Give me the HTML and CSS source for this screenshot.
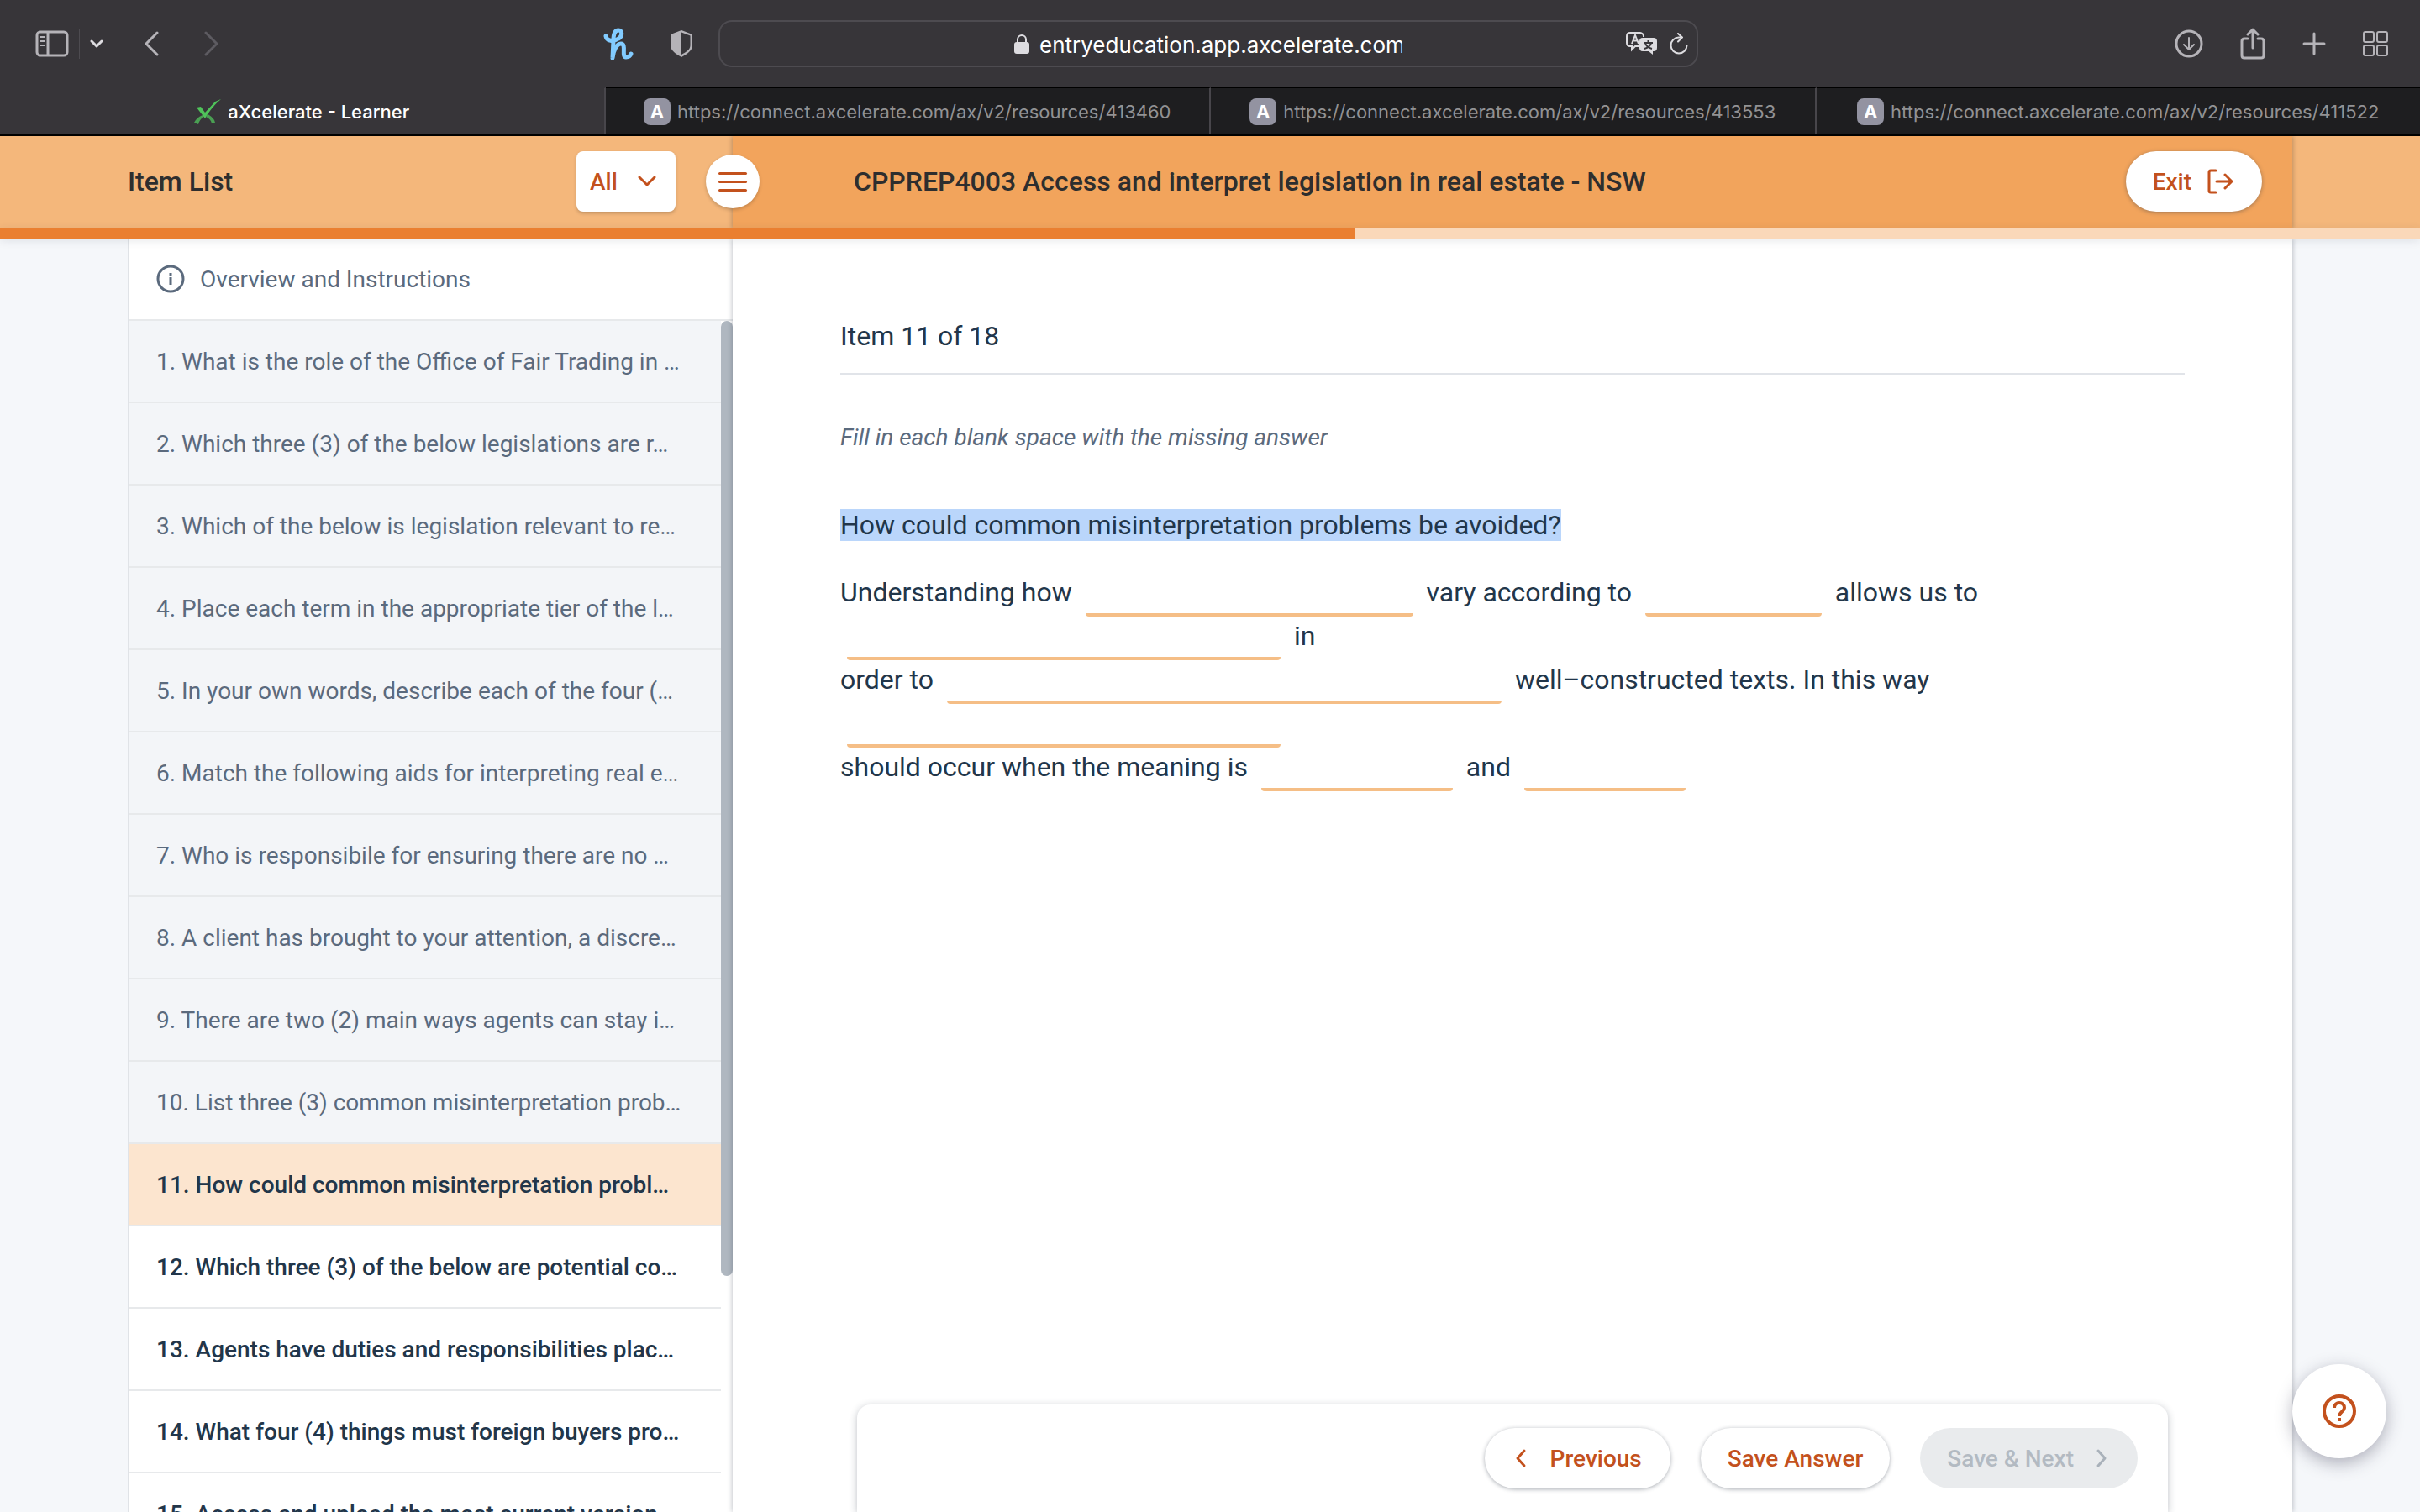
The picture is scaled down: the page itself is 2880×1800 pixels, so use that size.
FILE: index.html
```html
<!DOCTYPE html>
<html lang="en">
<head>
    <meta charset="UTF-8">
    <meta name="viewport" content="width=device-width, initial-scale=1.0">
    <title>aXcelerate - Learner</title>
    <link rel="stylesheet" href="styles.css">
</head>
<body>
    <!-- Browser toolbar -->
    <div class="toolbar">
        <div class="toolbar-side">
            <button class="icon-button" aria-label="Show sidebar">
                <svg width="40" height="32" viewBox="0 0 40 32" fill="none" stroke="#b5b3b8" stroke-width="3"><rect x="2" y="2" width="36" height="28" rx="4"/><path d="M15 2v28"/><path d="M6 8h5M6 13h5M6 18h5" stroke-width="2"/></svg>
            </button>
            <span class="toolbar-divider"></span>
            <button class="icon-button" aria-label="Tab groups">
                <svg width="16" height="12" viewBox="0 0 16 12" fill="none" stroke="#dddce0" stroke-width="3" stroke-linecap="round" stroke-linejoin="round"><path d="M2 3l6 6 6-6"/></svg>
            </button>
            <button class="icon-button back" aria-label="Back">
                <svg width="18" height="30" viewBox="0 0 18 30" fill="none" stroke="#b5b3b8" stroke-width="3" stroke-linecap="round" stroke-linejoin="round"><path d="M16 2L3 15l13 13"/></svg>
            </button>
            <button class="icon-button forward" aria-label="Forward">
                <svg width="18" height="30" viewBox="0 0 18 30" fill="none" stroke="#5d5b61" stroke-width="3" stroke-linecap="round" stroke-linejoin="round"><path d="M2 2l13 13L2 28"/></svg>
            </button>
            <button class="icon-button extension" aria-label="Honey">
                <svg width="38" height="40" viewBox="0 0 38 40" fill="none" stroke="#82cbff" stroke-width="5" stroke-linecap="round" stroke-linejoin="round"><path d="M4 11c1 6 9 7 15 3 5-3 5-10 0-10-5 0-6 6-6 12L12 37c1-9 5-17 10-17 7 0 0 16 6 16 3 0 5-1 6-4"/></svg>
            </button>
            <button class="icon-button shield" aria-label="Privacy report">
                <svg width="28" height="34" viewBox="0 0 28 34"><path d="M14 1L27 6v13c0 6-6 10-13 14C7 29 1 25 1 19V6z" fill="#b5b3b8"/><path d="M14 3.500l10.500 4V19c0 5-5 8-10.500 11z" fill="#373539"/></svg>
            </button>
        </div>
        <div class="address-bar">
            <svg width="18" height="24" viewBox="0 0 18 24"><rect x="0" y="10" width="18" height="14" rx="3" fill="#dddce0"/><path d="M4 11V7a5 5 0 0 1 10 0v4" fill="none" stroke="#dddce0" stroke-width="2"/></svg>
            <input class="address" type="text" aria-label="Address" value="entryeducation.app.axcelerate.com">
            <div class="address-icons">
                <button class="icon-button" aria-label="Translate">
                    <svg width="38" height="28" viewBox="0 0 38 28"><path d="M15 17h-4l-4 4v-4H5c-2 0-4-1-4-4V5c0-2 1-4 4-4h12c2 0 4 2 4 4v1" fill="none" stroke="#dddce0" stroke-width="2"/><path d="M7 14l4-10 4 10M8.500 10.500h5" fill="none" stroke="#dddce0" stroke-width="2"/><path d="M20 7h13c3 0 4 2 4 4v8c0 3-2 4-4 4h-1v4l-5-4h-7c-3 0-4-2-4-4v-8c0-2 1-4 4-4z" fill="#dddce0"/><path d="M21 13h11M26.500 10v3M30 13c-1 4-4 6-8 7M23 13c1 4 4 6 8 7" fill="none" stroke="#373539" stroke-width="2"/></svg>
                </button>
                <button class="icon-button" aria-label="Reload">
                    <svg width="22" height="26" viewBox="0 0 22 26" fill="none" stroke="#dddce0" stroke-width="2" stroke-linecap="round" stroke-linejoin="round"><path d="M20.500 15a9.500 9.500 0 1 1-9.500-9.500h4M10 1l5 4.500-5 5"/></svg>
                </button>
            </div>
        </div>
        <div class="toolbar-side right">
            <button class="icon-button" aria-label="Downloads">
                <svg width="34" height="34" viewBox="0 0 34 34" fill="none" stroke="#b5b3b8" stroke-width="3" stroke-linecap="round" stroke-linejoin="round"><circle cx="17" cy="17" r="15"/><path d="M17 10v14M11 18l6 6 6-6" stroke-width="2"/></svg>
            </button>
            <button class="icon-button share" aria-label="Share">
                <svg width="30" height="38" viewBox="0 0 30 38" fill="none" stroke="#b5b3b8" stroke-width="3" stroke-linecap="round" stroke-linejoin="round"><path d="M9 13H5c-2 0-3 1-3 3v17c0 2 1 3 3 3h20c2 0 3-1 3-3V16c0-2-1-3-3-3h-4M15 24V3M9 8l6-6 6 6"/></svg>
            </button>
            <button class="icon-button" aria-label="New tab">
                <svg width="28" height="28" viewBox="0 0 28 28" stroke="#b5b3b8" stroke-width="3" stroke-linecap="round"><path d="M14 2v24M2 14h24"/></svg>
            </button>
            <button class="icon-button" aria-label="Tab overview">
                <svg width="30" height="30" viewBox="0 0 30 30" fill="none" stroke="#b5b3b8" stroke-width="2"><rect x="1" y="1" width="12" height="12" rx="2"/><rect x="17" y="1" width="12" height="12" rx="2"/><rect x="1" y="17" width="12" height="12" rx="2"/><rect x="17" y="17" width="12" height="12" rx="2"/></svg>
            </button>
        </div>
    </div>

    <!-- Browser tabs -->
    <nav class="tabs">
        <a href="#" class="tab active">
            <svg width="32" height="30" viewBox="0 0 32 30"><path d="M3 10l5-1 5 7L25 3l7-3C24 7 18 14 13 23z" fill="#4fc35a"/><path d="M10 19c-5 2-8 5-10 9l5 2c1-4 3-7 6-8zM14 21c4 2 6 4 7 8l4-1c-1-5-5-8-9-10z" fill="#4a9f53"/></svg>
            aXcelerate - Learner
        </a>
        <a href="#" class="tab"><span class="favicon">A</span>https://connect.axcelerate.com/ax/v2/resources/413460</a>
        <a href="#" class="tab"><span class="favicon">A</span>https://connect.axcelerate.com/ax/v2/resources/413553</a>
        <a href="#" class="tab"><span class="favicon">A</span>https://connect.axcelerate.com/ax/v2/resources/411522</a>
    </nav>

    <header>
        <div class="list-header">
            <h2>Item List</h2>
            <div class="filter">
                <select aria-label="Filter items">
                    <option>All</option>
                </select>
                <svg width="24" height="16" viewBox="0 0 24 16" fill="none" stroke="#c3511d" stroke-width="3" stroke-linecap="round" stroke-linejoin="round"><path d="M3 3l9 9 9-9"/></svg>
            </div>
        </div>
        <div class="title-header">
            <button class="menu-button" aria-label="Toggle item list"><span></span><span></span><span></span></button>
            <h1>CPPREP4003 Access and interpret legislation in real estate - NSW</h1>
            <button class="pill exit">Exit
                <svg width="32" height="32" viewBox="0 0 32 32" fill="none" stroke="#c3511d" stroke-width="3" stroke-linecap="round" stroke-linejoin="round"><path d="M11 3H5c-2 0-2 1-2 2v22c0 1 0 2 2 2h6"/><path d="M12 16h18M22 8l8 8-8 8"/></svg>
            </button>
        </div>
    </header>
    <div class="progress"><div class="progress-value" style="width: 56%"></div></div>

    <div class="content">
        <aside>
            <a href="#" class="overview">
                <svg width="34" height="34" viewBox="0 0 34 34" fill="none" stroke="#5b6a7d" stroke-width="3"><circle cx="17" cy="17" r="15"/><path d="M17 15v9M17 10v3"/></svg>
                Overview and Instructions
            </a>
            <ul class="items">
                <li><a href="#">1. What is the role of the Office of Fair Trading in …</a></li>
                <li><a href="#">2. Which three (3) of the below legislations are r…</a></li>
                <li><a href="#">3. Which of the below is legislation relevant to re…</a></li>
                <li><a href="#">4. Place each term in the appropriate tier of the l…</a></li>
                <li><a href="#">5. In your own words, describe each of the four (…</a></li>
                <li><a href="#">6. Match the following aids for interpreting real e…</a></li>
                <li><a href="#">7. Who is responsibile for ensuring there are no …</a></li>
                <li><a href="#">8. A client has brought to your attention, a discre…</a></li>
                <li><a href="#">9. There are two (2) main ways agents can stay i…</a></li>
                <li><a href="#">10. List three (3) common misinterpretation prob…</a></li>
                <li class="todo current"><a href="#">11. How could common misinterpretation probl…</a></li>
                <li class="todo"><a href="#">12. Which three (3) of the below are potential co…</a></li>
                <li class="todo"><a href="#">13. Agents have duties and responsibilities plac…</a></li>
                <li class="todo"><a href="#">14. What four (4) things must foreign buyers pro…</a></li>
                <li class="todo"><a href="#">15. Access and upload the most current version…</a></li>
            </ul>
            <div class="scroll-thumb"></div>
        </aside>

        <main>
            <h3>Item 11 of 18</h3>
            <p class="hint">Fill in each blank space with the missing answer</p>
            <p class="question"><mark>How could common misinterpretation problems be avoided?</mark></p>
            <p class="passage">
                Understanding how <input type="text" class="blank blank-1" aria-label="Blank 1"> vary according to <input type="text" class="blank blank-2" aria-label="Blank 2"> allows us to
                <input type="text" class="blank blank-3" aria-label="Blank 3"> in<br>
                order to <input type="text" class="blank blank-4" aria-label="Blank 4"> well–constructed texts. In this way
                <input type="text" class="blank blank-3" aria-label="Blank 5"><br>
                should occur when the meaning is <input type="text" class="blank blank-5" aria-label="Blank 6"> and <input type="text" class="blank blank-6" aria-label="Blank 7">
            </p>
            <div class="actions">
                <button class="pill previous">
                    <svg width="16" height="24" viewBox="0 0 16 24" fill="none" stroke="#c3511d" stroke-width="3" stroke-linecap="round" stroke-linejoin="round"><path d="M11 3L3 12l8 9"/></svg>
                    Previous
                </button>
                <button class="pill">Save Answer</button>
                <button class="pill next" disabled>Save &amp; Next
                    <svg width="16" height="24" viewBox="0 0 16 24" fill="none" stroke="#a9b1ba" stroke-width="3" stroke-linecap="round" stroke-linejoin="round"><path d="M3 3l8 9-8 9"/></svg>
                </button>
            </div>
        </main>
    </div>

    <button class="help" aria-label="Help">
        <svg width="40" height="40" viewBox="0 0 40 40" fill="none" stroke="#c3511d" stroke-width="4"><circle cx="20" cy="20" r="18"/><path d="M14 16c0-8 12-8 12 0 0 4-6 5-6 10M20 28v4"/></svg>
    </button>
</body>
</html>
```
FILE: styles.css
```css
* {
    box-sizing: border-box;
}

body {
    margin: 0;
    height: 100vh;
    display: flex;
    flex-direction: column;
    overflow: hidden;
    font-family: Roboto, Arial, sans-serif;
    background: #f5f7fa;
    color: #22364a;
}

h1, h2, h3, p, ul {
    margin: 0;
    padding: 0;
    font-weight: 500;
}

a {
    color: inherit;
    text-decoration: none;
}

button, input, select {
    font-family: inherit;
    margin: 0;
    padding: 0;
    border: none;
    background: none;
}

svg {
    display: block;
    flex: none;
}

/* Browser toolbar */
.toolbar {
    flex: none;
    height: 104px;
    display: flex;
    align-items: center;
    background: #373539;
    font-family: Inter, sans-serif;
}

.toolbar-side {
    flex: 1;
    display: flex;
    align-items: center;
    padding: 0 30px 0 42px;
}

.toolbar-side.right {
    justify-content: flex-end;
    gap: 44px;
    padding: 0 38px;
}

.toolbar-divider {
    width: 1px;
    height: 36px;
    margin: 0 12px;
    background: #4d4b50;
}

.back {
    margin-left: 48px;
}

.forward {
    margin-left: 54px;
}

.extension {
    margin-left: auto;
}

.shield {
    margin-left: 42px;
}

.address-bar {
    position: relative;
    width: 1166px;
    height: 56px;
    display: flex;
    align-items: center;
    justify-content: center;
    gap: 12px;
    border: 2px solid #4d4b50;
    border-radius: 16px;
}

.address {
    width: 432px;
    padding-top: 2px;
    font-size: 26px;
    color: #fff;
}

.address-icons {
    position: absolute;
    right: 10px;
    display: flex;
    align-items: center;
    gap: 14px;
}

/* Browser tabs */
.tabs {
    flex: none;
    display: flex;
    height: 58px;
    border-bottom: 2px solid #000;
    background: #1e1e20;
    font-family: Inter, sans-serif;
    font-size: 22px;
}

.tab {
    flex: 1;
    display: flex;
    align-items: center;
    justify-content: center;
    gap: 8px;
    border-top: 1px solid #000;
    border-right: 2px solid #48464b;
    color: #929294;
    white-space: nowrap;
}

.tab:last-child {
    border-right: none;
}

.tab.active {
    background: #373539;
    border-top-color: #373539;
    color: #fff;
    font-weight: 500;
}

.favicon {
    width: 32px;
    line-height: 32px;
    border-radius: 8px;
    background: #9393a1;
    color: #fff;
    font-weight: 700;
    text-align: center;
}

/* Page header */
header {
    flex: none;
    display: flex;
    height: 110px;
    padding: 0 152px;
    background: #f4b77b;
    color: #2e2e2e;
}

h1, h2 {
    font-size: 32px;
}

.list-header {
    width: 720px;
    display: flex;
    align-items: center;
    justify-content: space-between;
    padding: 0 68px 2px 0;
}

.title-header {
    position: relative;
    flex: 1;
    display: flex;
    align-items: center;
    justify-content: space-between;
    padding: 0 36px 2px 144px;
    background: #f2a45c;
    box-shadow: 0 0 6px rgba(0, 0, 0, 0.3);
}

.filter {
    position: relative;
    display: flex;
    align-items: center;
}

.filter select {
    appearance: none;
    width: 118px;
    height: 72px;
    padding: 0 16px;
    border-radius: 8px;
    background: #fff;
    box-shadow: 0 2px 4px rgba(0, 0, 0, 0.2);
    color: #c3511d;
    font-size: 28px;
    font-weight: 500;
}

.filter svg {
    position: absolute;
    right: 22px;
}

.menu-button {
    position: absolute;
    left: -32px;
    width: 64px;
    height: 64px;
    display: flex;
    flex-direction: column;
    align-items: center;
    justify-content: center;
    gap: 7px;
    border-radius: 50%;
    background: #fff;
    box-shadow: 0 2px 4px rgba(0, 0, 0, 0.2);
}

.menu-button span {
    width: 34px;
    height: 3px;
    border-radius: 2px;
    background: #c3511d;
}

.pill {
    height: 72px;
    display: flex;
    align-items: center;
    padding: 0 32px;
    border-radius: 36px;
    background: #fff;
    box-shadow: 0 1px 5px rgba(40, 50, 65, 0.4);
    color: #c3511d;
    font-size: 28px;
    font-weight: 500;
}

.exit {
    gap: 18px;
    padding-right: 34px;
}

.progress {
    flex: none;
    position: relative;
    z-index: 1;
    height: 12px;
    background: #fad8b9;
    box-shadow: 0 2px 12px rgba(40, 50, 65, 0.12);
}

.progress-value {
    height: 100%;
    background: #ea7f30;
}

.content {
    flex: 1;
    min-height: 0;
    display: flex;
    padding: 0 152px;
}

/* Item list */
aside {
    position: relative;
    width: 720px;
    border-left: 2px solid #e0e3e7;
    background: #fff;
    color: #5b6a7d;
    font-size: 28px;
}

.overview {
    height: 98px;
    display: flex;
    align-items: center;
    gap: 18px;
    padding-left: 32px;
    border-bottom: 2px solid #e7e9eb;
}

.items {
    list-style: none;
    margin-right: 14px;
}

.items li {
    height: 98px;
    padding: 0 32px;
    line-height: 98px;
    border-bottom: 2px solid #e7e9eb;
    background: #f3f5f8;
    font-weight: 400;
    white-space: nowrap;
}

.items .todo {
    background: #fff;
    color: #22364a;
    font-weight: 500;
}

.items .current {
    background: #fce5cf;
}

.scroll-thumb {
    position: absolute;
    top: 98px;
    right: 0;
    width: 14px;
    height: 75%;
    border-radius: 8px;
    background: #afb7c0;
}

/* Question */
main {
    position: relative;
    flex: 1;
    display: flex;
    flex-direction: column;
    padding: 94px 128px 0;
    background: #fff;
    box-shadow: 0 0 6px rgba(40, 50, 65, 0.35);
    font-size: 32px;
}

h3 {
    padding-bottom: 22px;
    border-bottom: 2px solid #e1e4e9;
    font-size: 32px;
    font-weight: 400;
    line-height: 44px;
}

.hint {
    margin-top: 53px;
    color: #5b6a7d;
    font-size: 28px;
    font-style: italic;
    font-weight: 400;
    line-height: 44px;
}

.question {
    margin-top: 60px;
    font-weight: 400;
    line-height: 44px;
}

mark {
    background: #bad6fb;
    color: inherit;
}

.passage {
    margin-top: 35px;
    font-weight: 400;
    line-height: 44px;
}

.blank {
    height: 52px;
    margin: 0 8px;
    padding-bottom: 2px;
    border-bottom: 4px solid #f5be86;
    border-radius: 4px;
    font-size: 32px;
}

.blank-1 {
    width: 390px;
}

.blank-2 {
    width: 210px;
}

.blank-3 {
    width: 516px;
}

.blank-4 {
    width: 660px;
}

.blank-5 {
    width: 228px;
}

.blank-6 {
    width: 192px;
}

/* Bottom buttons */
.actions {
    display: flex;
    justify-content: flex-end;
    gap: 36px;
    height: 128px;
    margin: auto 20px 0;
    padding: 28px 36px;
    border-radius: 16px 16px 0 0;
    box-shadow: 0 2px 10px rgba(40, 50, 65, 0.3);
}

.previous {
    gap: 26px;
    padding: 0 34px 0 36px;
}

.next {
    gap: 26px;
    padding-right: 34px;
    background: #e9ebed;
    box-shadow: none;
    color: #b3bac2;
}

.help {
    position: fixed;
    z-index: 1;
    right: 40px;
    bottom: 64px;
    width: 112px;
    height: 112px;
    display: flex;
    align-items: center;
    justify-content: center;
    border-radius: 50%;
    background: #fff;
    box-shadow: 0 6px 20px rgba(40, 40, 65, 0.35);
}
```
